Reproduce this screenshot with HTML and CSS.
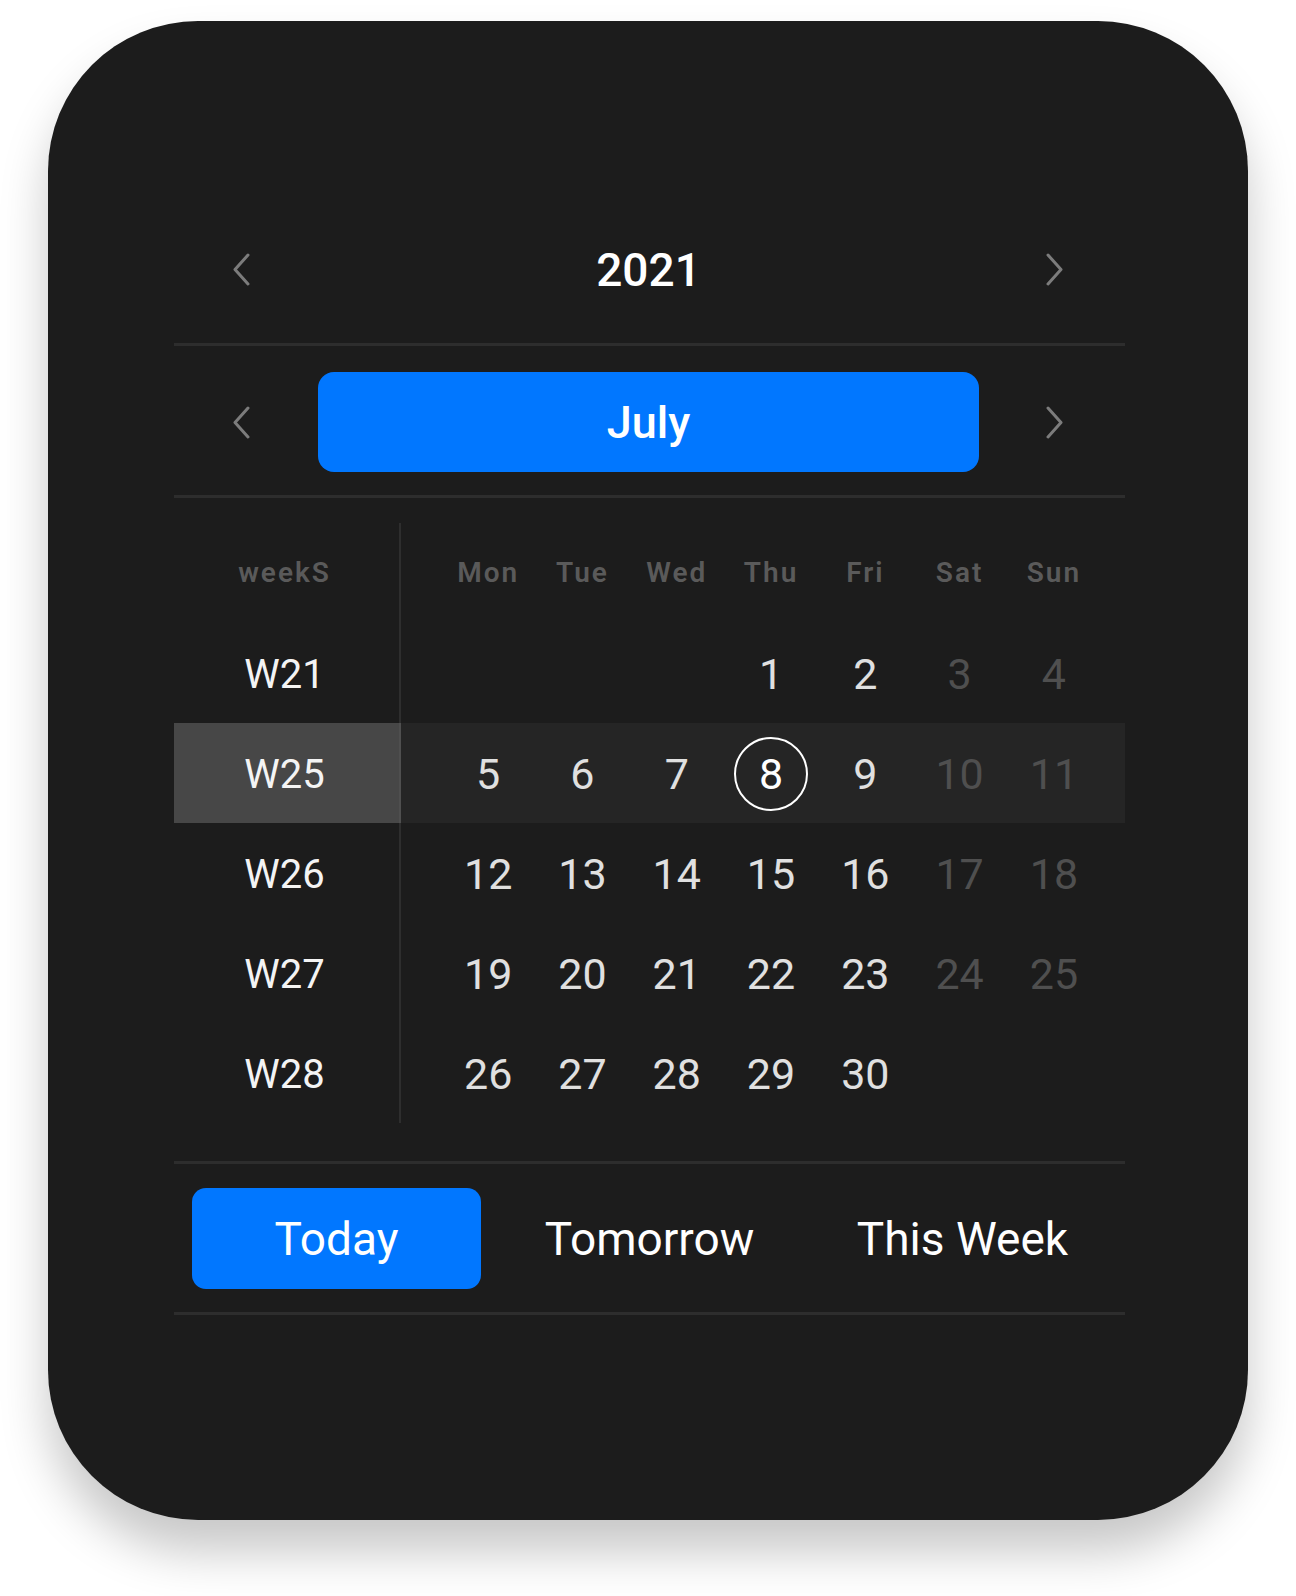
FILE: index.html
```html
<!DOCTYPE html>
<html lang="en">
<head>
<meta charset="utf-8">
<title>Calendar</title>
<link rel="stylesheet" href="styles.css">
</head>
<body>
<div class="card">
  <div class="nav-row year-row">
    <svg class="chev" width="18" height="33" viewBox="0 0 18 33"><path d="M16 2 L3 16.5 L16 31" /></svg>
    <div class="nav-center year">2021</div>
    <svg class="chev" width="18" height="33" viewBox="0 0 18 33"><path d="M2 2 L15 16.5 L2 31" /></svg>
  </div>
  <div class="nav-row month-row">
    <svg class="chev" width="18" height="33" viewBox="0 0 18 33"><path d="M16 2 L3 16.5 L16 31" /></svg>
    <div class="nav-center month-pill">July</div>
    <svg class="chev" width="18" height="33" viewBox="0 0 18 33"><path d="M2 2 L15 16.5 L2 31" /></svg>
  </div>
  <div class="grid">
    <div class="row head">
      <div class="wk">weekS</div>
      <div class="days">
        <span>Mon</span><span>Tue</span><span>Wed</span><span>Thu</span><span>Fri</span><span>Sat</span><span>Sun</span>
      </div>
    </div>
    <div class="row">
      <div class="wk">W21</div>
      <div class="days">
        <span></span><span></span><span></span><span>1</span><span>2</span><span class="we">3</span><span class="we">4</span>
      </div>
    </div>
    <div class="row current">
      <div class="wk">W25</div>
      <div class="days">
        <span>5</span><span>6</span><span>7</span><span><b class="today">8</b></span><span>9</span><span class="we">10</span><span class="we">11</span>
      </div>
    </div>
    <div class="row">
      <div class="wk">W26</div>
      <div class="days">
        <span>12</span><span>13</span><span>14</span><span>15</span><span>16</span><span class="we">17</span><span class="we">18</span>
      </div>
    </div>
    <div class="row">
      <div class="wk">W27</div>
      <div class="days">
        <span>19</span><span>20</span><span>21</span><span>22</span><span>23</span><span class="we">24</span><span class="we">25</span>
      </div>
    </div>
    <div class="row">
      <div class="wk">W28</div>
      <div class="days">
        <span>26</span><span>27</span><span>28</span><span>29</span><span>30</span><span></span><span></span>
      </div>
    </div>
  </div>
  <div class="quick">
    <div class="seg active">Today</div>
    <div class="seg">Tomorrow</div>
    <div class="seg">This Week</div>
  </div>
</div>
</body>
</html>
```
FILE: styles.css
```css
html, body {
  margin: 0;
  padding: 0;
  background: #ffffff;
}
body {
  font-family: Roboto, "Liberation Sans", sans-serif;
  padding: 21px 0 0 48px;
  height: 1596px;
  box-sizing: border-box;
  overflow: hidden;
}
.card {
  width: 1200px;
  height: 1499px;
  box-sizing: border-box;
  background: #1c1c1c;
  border-radius: 150px;
  box-shadow: 0 32px 48px rgba(0, 0, 0, 0.22);
  padding: 175px 123px 0 126px;
  color: #ffffff;
}
.nav-row {
  display: flex;
  align-items: center;
  padding: 0 61px 0 58px;
  border-bottom: 3px solid #2d2d2d;
}
.year-row {
  height: 147px;
}
.month-row {
  box-sizing: border-box;
  padding-top: 26px;
  padding-bottom: 23px;
  height: 152px;
}
.chev {
  flex: none;
  display: block;
}
.chev path {
  fill: none;
  stroke: #7c7c7c;
  stroke-width: 3;
  stroke-linecap: round;
  stroke-linejoin: round;
}
.nav-center {
  flex: 1;
  margin: 0 67px 0 68px;
  text-align: center;
  line-height: 1;
}
.year {
  font-size: 46px;
  font-weight: 500;
}
.month-pill {
  height: 100px;
  background: #0177ff;
  border-radius: 16px;
  display: flex;
  align-items: center;
  justify-content: center;
  font-size: 45px;
  font-weight: 500;
}
.grid {
  padding: 25px 0 38px;
}
.row {
  display: flex;
  height: 100px;
}
.wk {
  width: 227px;
  box-sizing: border-box;
  padding: 3px 4px 0 0;
  flex: none;
  border-right: 2px solid #2e2e2e;
  display: flex;
  align-items: center;
  justify-content: center;
  font-size: 40px;
  color: #f4f4f4;
  line-height: 1;
}
.days {
  flex: 1;
  display: grid;
  grid-template-columns: repeat(7, 94.3px);
  padding-left: 40px;
}
.days span {
  display: flex;
  align-items: center;
  justify-content: center;
  font-size: 43px;
  color: #e0e0e0;
  line-height: 1;
  padding-top: 2px;
}
.days span.we {
  color: #4f4f4f;
}
.head .wk,
.head .days span {
  font-size: 28px;
  font-weight: 600;
  color: #5a5a5a;
  letter-spacing: 2px;
  padding-top: 0;
}
.current .wk {
  background: #474747;
  border-right-color: #4f4f4f;
}
.current .days {
  background: #252525;
}
.today {
  width: 70px;
  height: 70px;
  border: 2.5px solid #ffffff;
  border-radius: 50%;
  display: flex;
  align-items: center;
  justify-content: center;
  font-weight: 400;
  color: #ffffff;
}
.quick {
  display: flex;
  border-top: 3px solid #2d2d2d;
  border-bottom: 3px solid #2d2d2d;
  padding: 24px 6px 23px;
}
.seg {
  flex: 1;
  height: 101px;
  margin: 0 12px;
  display: flex;
  align-items: center;
  justify-content: center;
  font-size: 46px;
  color: #ffffff;
  line-height: 1;
  border-radius: 14px;
}
.seg.active {
  background: #0177ff;
}
```
